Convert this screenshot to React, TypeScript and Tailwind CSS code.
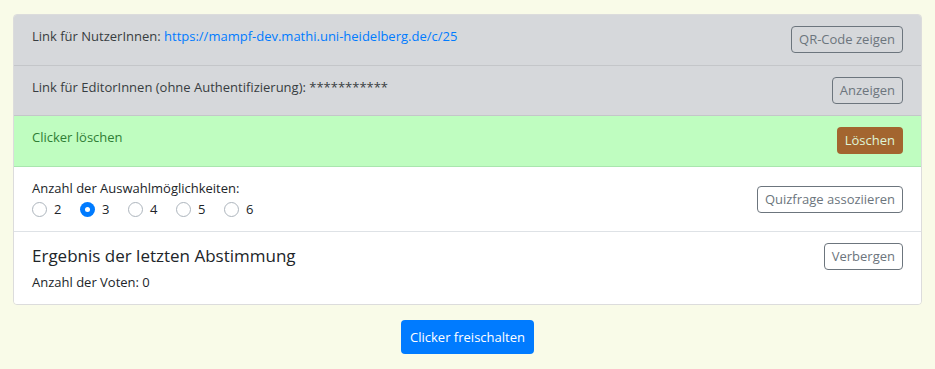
import { useState } from "react";

const font = "font-['Open_Sans','Noto_Sans',sans-serif]";

function OutlineButton({ label }: { label: string }) {
  return (
    <button className="h-[27px] shrink-0 rounded-[4px] border border-[#6c757d] px-[7px] text-[13px] leading-none text-[#6c757d]">
      {label}
    </button>
  );
}

export default function App() {
  const [choices, setChoices] = useState(3);

  return (
    <main className={`min-h-screen w-full bg-[#f9fbe8] px-[13px] pt-[14px] text-[13px] text-[#212529] antialiased ${font}`}>
      <div className="overflow-hidden rounded-[4px] border border-[#dcdcdc]">
        {/* Link für NutzerInnen */}
        <div className="flex h-[51px] items-start justify-between border-b border-[#c4c6c9] bg-[#d6d8db] px-[18px] pt-[11px]">
          <p className="leading-[21px] text-[#383d41]">
            Link für NutzerInnen:{" "}
            <a href="#" className="text-[#007bff]">
              https://mampf-dev.mathi.uni-heidelberg.de/c/25
            </a>
          </p>
          <OutlineButton label="QR-Code zeigen" />
        </div>

        {/* Link für EditorInnen */}
        <div className="flex h-[50px] items-start justify-between border-b border-[#c4c6c9] bg-[#d6d8db] px-[18px] pt-[11px]">
          <p className="leading-[21px] text-[#383d41]">Link für EditorInnen (ohne Authentifizierung): ***********</p>
          <OutlineButton label="Anzeigen" />
        </div>

        {/* Clicker löschen */}
        <div className="flex h-[51px] items-start justify-between border-b border-[#a9e6ae] bg-[#bffdc0] px-[18px] pt-[11px]">
          <p className="leading-[21px] text-[#2f7d35]">Clicker löschen</p>
          <button className="h-[27px] rounded-[4px] bg-[#a3652f] px-[8px] text-[13px] leading-none text-[#dff5d8]">
            Löschen
          </button>
        </div>

        {/* Auswahlmöglichkeiten */}
        <div className="flex h-[65px] items-center justify-between border-b border-[#dee2e6] bg-white px-[18px]">
          <div>
            <p className="leading-[21px]">Anzahl der Auswahlmöglichkeiten:</p>
            <div className="flex h-[21px] items-center gap-[18px]">
              {[2, 3, 4, 5, 6].map((n) => (
                <label key={n} className="flex cursor-pointer items-center gap-[7px]" onClick={() => setChoices(n)}>
                  {n === choices ? (
                    <span className="flex h-[15px] w-[15px] items-center justify-center rounded-full bg-[#007bff]">
                      <span className="h-[5px] w-[5px] rounded-full bg-white" />
                    </span>
                  ) : (
                    <span className="h-[15px] w-[15px] rounded-full border border-[#adb5bd] bg-white" />
                  )}
                  <span className="w-[8px]">{n}</span>
                </label>
              ))}
            </div>
          </div>
          <OutlineButton label="Quizfrage assoziieren" />
        </div>

        {/* Ergebnis */}
        <div className="flex h-[72px] items-start justify-between bg-white px-[18px] pt-[11px]">
          <div>
            <h5 className="text-[17px] leading-[26px]">Ergebnis der letzten Abstimmung</h5>
            <p className="mt-[3px] leading-[21px]">Anzahl der Voten: 0</p>
          </div>
          <OutlineButton label="Verbergen" />
        </div>
      </div>

      <div className="flex justify-center pt-[15px]">
        <button className="h-[34px] rounded-[4px] bg-[#007bff] px-[9px] text-[13px] leading-none text-white">
          Clicker freischalten
        </button>
      </div>
    </main>
  );
}
